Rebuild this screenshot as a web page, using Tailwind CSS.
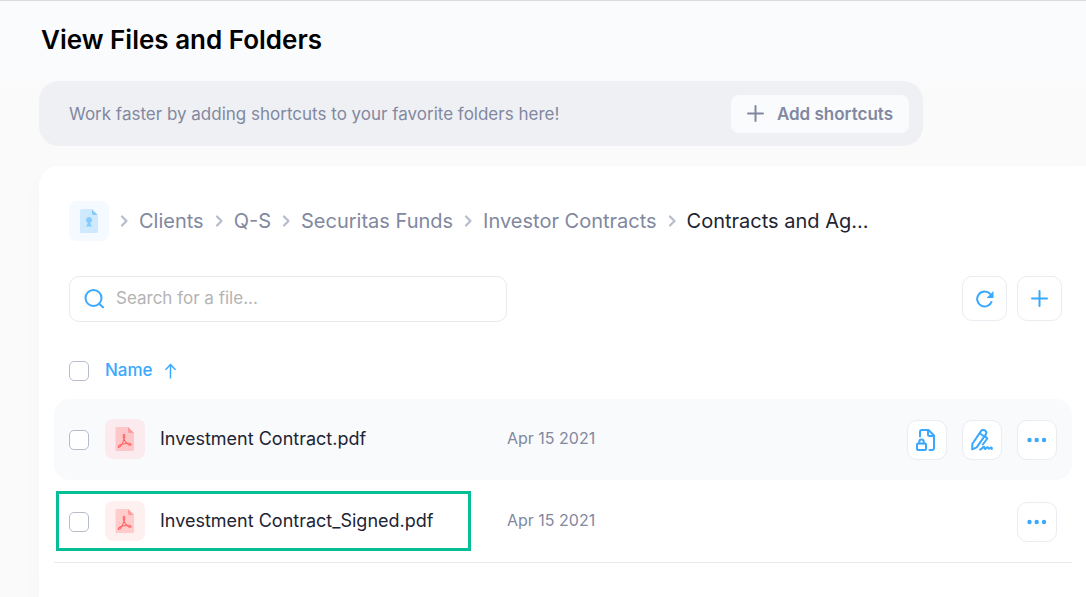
<!DOCTYPE html>
<html lang="en">

<head>
  <meta charset="UTF-8" />
  <meta name="viewport" content="width=device-width, initial-scale=1.0" />
  <title>View Files and Folders</title>
  <script src="https://cdn.jsdelivr.net/npm/@tailwindcss/browser@4"></script>
</head>

<body class="bg-[#fafafa] font-['Inter',sans-serif] text-[#1d2433]">
  <!-- icons used more than once -->
  <svg class="hidden">
    <symbol id="chevron" viewBox="0 0 10 14">
      <path d="M3 2.500l4.500 4.500L3 11.500" fill="none" stroke="#b6bccb" stroke-width="2.200" stroke-linecap="round" stroke-linejoin="round" />
    </symbol>
    <symbol id="plus" viewBox="0 0 18 18">
      <path d="M8.500 1v15M1 8.500h15" fill="none" stroke="currentColor" stroke-width="2" stroke-linecap="round" />
    </symbol>
    <symbol id="dots" viewBox="0 0 20 6">
      <circle cx="2.500" cy="3" r="2.200" />
      <circle cx="9.700" cy="3" r="2.200" />
      <circle cx="17" cy="3" r="2.200" />
    </symbol>
    <symbol id="pdf" viewBox="0 0 20 24">
      <path d="M1.500 0H13l6 6v16.500a1.500 1.500 0 0 1-1.500 1.500h-16A1.500 1.500 0 0 1 .5 22.500V1.500A1.500 1.500 0 0 1 1.500 0z" fill="#ff6b6b" opacity=".28" />
      <path d="M13 0l6 6h-4.500A1.500 1.500 0 0 1 13 4.500z" fill="#ff6b6b" opacity=".5" />
      <path d="M9 12.200C7.800 9.800 8 7.200 9 7.200S10.200 9.800 9 12.200C8 15.500 5.500 20.500 4 20.500 2.200 20.300 3.600 18 7 17.200c4-1 8.800-1.300 9.200.2.200 1.800-4.800.6-7.200-5.200z" fill="none" stroke="#ff6464" stroke-width="1.100" stroke-linejoin="round" />
    </symbol>
  </svg>

  <div class="border-t border-[#d9dade] min-h-screen flex flex-col">
    <header class="bg-[#f9fbfd] h-20 shrink-0 pl-[41px] pb-0.5 flex items-center">
      <h1 class="text-[26px] font-semibold text-black leading-8">View Files and Folders</h1>
    </header>

    <!-- shortcuts -->
    <div class="ml-[39px] mr-4 max-w-[884px] h-[65px] bg-[#eff0f4] rounded-[20px] pl-[30px] pr-3.5 flex items-center justify-between shrink-0">
      <p class="pt-0.5 text-[17px] text-[#8188a0]">Work faster by adding shortcuts to your favorite folders here!</p>
      <button class="bg-[#f9fbfd] rounded-lg h-[38px] px-4 flex items-center gap-3 text-[17px] font-semibold text-[#8188a0]">
        <svg class="size-[18px]"><use href="#plus" /></svg>
        <span class="pt-0.5">Add shortcuts</span>
      </button>
    </div>

    <main class="ml-[39px] mt-5 grow bg-white rounded-tl-[20px] pl-[15px] pr-3.5 pt-[35px] shadow-[0_10px_30px_rgba(0,0,0,0.02)]">
      <nav class="pl-[15px] flex items-center text-[20px] text-[#8188a0]" aria-label="Breadcrumb">
        <a href="#" class="size-10 mr-2.5 rounded-lg bg-[#f4faff] flex items-center justify-center" aria-label="Home">
          <svg class="w-[18px] h-6" viewBox="0 0 18 24">
            <path d="M1.500 0H12l6 6v16.500a1.500 1.500 0 0 1-1.500 1.500h-15A1.500 1.500 0 0 1 0 22.500v-21A1.500 1.500 0 0 1 1.500 0z" fill="#cfeaff" />
            <path d="M12 0.500l5.500 5.500h-4A1.500 1.500 0 0 1 12 4.500z" fill="#84cbff" />
            <path d="M9 8a3 3 0 0 1 1.500 5.600V15l1.500 2.500H6L7.500 15v-1.400A3 3 0 0 1 9 8z" fill="#84cbff" />
          </svg>
        </a>
        <svg class="w-2.5 h-3.5 mr-2.5"><use href="#chevron" /></svg>
        <a href="#">Clients</a>
        <svg class="w-2.5 h-3.5 mx-2.5"><use href="#chevron" /></svg>
        <a href="#">Q-S</a>
        <svg class="w-2.5 h-3.5 mx-2.5"><use href="#chevron" /></svg>
        <a href="#">Securitas Funds</a>
        <svg class="w-2.5 h-3.5 mx-2.5"><use href="#chevron" /></svg>
        <a href="#">Investor Contracts</a>
        <svg class="w-2.5 h-3.5 mx-2.5"><use href="#chevron" /></svg>
        <a href="#" class="text-[#1d2433]">Contracts and Ag...</a>
      </nav>

      <div class="pl-[15px] pr-2.5 mt-[35px] flex items-start gap-2.5">
        <label class="w-[438px] h-[46px] mr-auto border border-[#e9eaf0] rounded-[10px] px-3.5 flex items-center gap-3">
          <svg class="size-5 shrink-0" viewBox="0 0 20 20" fill="none" stroke="#39a8ff" stroke-width="2">
            <circle cx="9.500" cy="9" r="8" />
            <path d="M14.500 14l5 4.800" />
          </svg>
          <input type="text" aria-label="Search for a file" placeholder="Search for a file..." class="w-full text-[17px] outline-none placeholder:text-[#b3b3b3]" />
        </label>
        <button class="size-[45px] border border-[#ebecf1] rounded-[10px] flex items-center justify-center" aria-label="Refresh">
          <svg class="size-[18px]" viewBox="0 0 18 18">
            <path d="M15.800 11.200A7.500 7.500 0 1 1 14.300 4" fill="none" stroke="#39a8ff" stroke-width="2" />
            <path d="M17.500 1v7h-7z" fill="#39a8ff" />
          </svg>
        </button>
        <button class="size-[45px] border border-[#ebecf1] rounded-[10px] flex items-center justify-center text-[#39a8ff]" aria-label="Add">
          <svg class="size-[18px]"><use href="#plus" /></svg>
        </button>
      </div>

      <table class="w-full table-fixed mt-5 text-left text-[18px]">
        <thead>
          <tr class="h-[57px]">
            <th class="w-[51px] pl-[15px]">
              <input type="checkbox" aria-label="Select all" class="block size-5 appearance-none bg-white border border-[#b6bccb] rounded-[5px]" />
            </th>
            <th class="w-[402px] text-[17px] font-medium text-[#39a8ff]">
              <button class="flex items-center gap-3">
                Name
                <svg class="w-3 h-4" viewBox="0 0 12 16" fill="none" stroke="#39a8ff" stroke-width="1.500">
                  <path d="M5.500 15.500V2M.5 6.800L5.500 1.500l5 5.300" />
                </svg>
              </button>
            </th>
            <th aria-label="Date"></th>
            <th class="w-[180px]" aria-label="Actions"></th>
          </tr>
        </thead>
        <tbody>
          <tr class="h-[81px]">
            <td class="bg-[#f9fafc] rounded-l-2xl pl-[15px]">
              <input type="checkbox" aria-label="Select Investment Contract.pdf" class="block size-5 appearance-none bg-white border border-[#b6bccb] rounded-[5px]" />
            </td>
            <td class="bg-[#f9fafc] pb-0.5">
              <div class="flex items-center gap-[15px]">
                <span class="size-10 rounded-lg bg-[#fcebee] flex items-center justify-center">
                  <svg class="w-5 h-6"><use href="#pdf" /></svg>
                </span>
                <a href="#">Investment Contract.pdf</a>
              </div>
            </td>
            <td class="bg-[#f9fafc] pb-1 text-[16px] text-[#8188a0]">Apr 15 2021</td>
            <td class="bg-[#f9fafc] rounded-r-2xl pr-[15px]">
              <div class="flex justify-end gap-[15px]">
                <button class="size-10 bg-white border border-[#ebecf1] rounded-[10px] flex items-center justify-center" aria-label="Lock file">
                  <svg class="size-[22px]" viewBox="0 0 22 22" fill="none" stroke="#39a8ff" stroke-width="2" stroke-linejoin="round" stroke-linecap="round">
                    <path d="M4 7.500V3A2 2 0 0 1 6 1H12.500l5.500 5.500v12.500a2 2 0 0 1-2 2h-2.500" />
                    <path d="M12 1.500V5.500a1.500 1.500 0 0 0 1.500 1.500H17.500" />
                    <rect x="1" y="14.500" width="9" height="6.500" rx="1" />
                    <path d="M3.300 14.500v-1.800a2.200 2.200 0 0 1 4.400 0V14.500" />
                  </svg>
                </button>
                <button class="size-10 bg-white border border-[#ebecf1] rounded-[10px] flex items-center justify-center" aria-label="Sign file">
                  <svg class="size-[22px]" viewBox="0 0 22 22" fill="none" stroke="#39a8ff" stroke-width="2" stroke-linejoin="round" stroke-linecap="round">
                    <path d="M9.800 2.400a2.800 2.800 0 0 1 5 3L5.700 18.300 1.200 20.300 1.300 15z" />
                    <path d="M9 4.500l4.800 3.300M14.300 7.500l2 2-4.500 6" />
                    <path d="M9 20.500c1.500 0 3-2.700 4-2.700s0 2.200 1 2.200 1.500-1.800 2.500-1.800.5 1.500 1.500 1.500 1-1.300 2-1.300.8 1 .8 1.600" />
                  </svg>
                </button>
                <button class="size-10 bg-white border border-[#ebecf1] rounded-[10px] flex items-center justify-center" aria-label="More">
                  <svg class="w-5 h-1.5 fill-[#39a8ff]"><use href="#dots" /></svg>
                </button>
              </div>
            </td>
          </tr>
          <tr class="h-[82px] border-b border-[#e9eaf0]">
            <td class="pl-[15px] pt-0.5 relative">
              <!-- highlight around the signed copy -->
              <div class="absolute left-0.5 top-[11px] w-[415px] h-[60px] border-3 border-[#06bf98] pointer-events-none"></div>
              <input type="checkbox" aria-label="Select Investment Contract_Signed.pdf" class="block size-5 appearance-none bg-white border border-[#b6bccb] rounded-[5px]" />
            </td>
            <td>
              <div class="flex items-center gap-[15px]">
                <span class="size-10 rounded-lg bg-[#fff0f0] flex items-center justify-center">
                  <svg class="w-5 h-6"><use href="#pdf" /></svg>
                </span>
                <a href="#">Investment Contract_Signed.pdf</a>
              </div>
            </td>
            <td class="pb-0.5 text-[16px] text-[#8188a0]">Apr 15 2021</td>
            <td class="pr-[15px] pt-0.5">
              <div class="flex justify-end">
                <button class="size-10 bg-white border border-[#ebecf1] rounded-[10px] flex items-center justify-center" aria-label="More">
                  <svg class="w-5 h-1.5 fill-[#39a8ff]"><use href="#dots" /></svg>
                </button>
              </div>
            </td>
          </tr>
        </tbody>
      </table>
    </main>
  </div>
</body>

</html>
